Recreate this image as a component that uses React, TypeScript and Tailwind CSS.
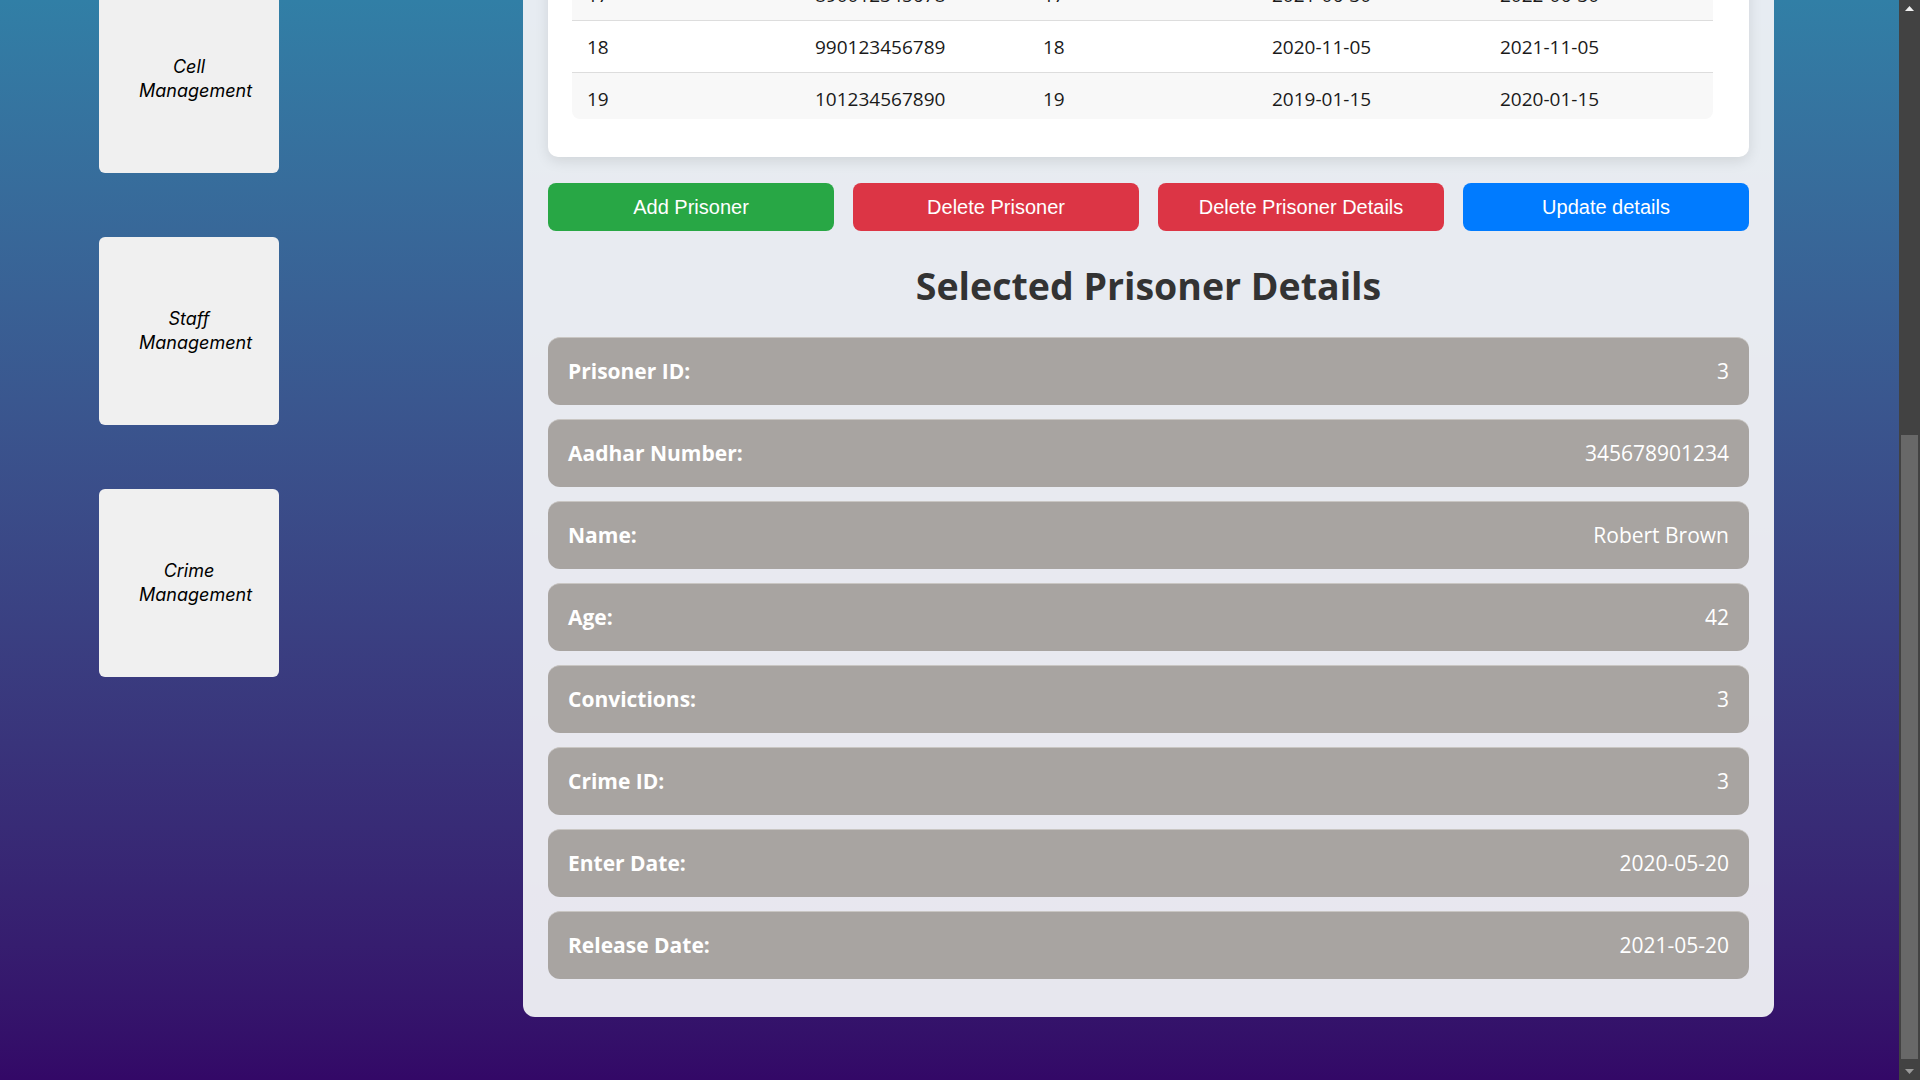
interface Detail {
  label: string
  value: string
}

const ROWS = [
  { id: '17', aadhar: '890012345678', cell: '17', enter: '2021-06-30', release: '2022-06-30', shade: true },
  { id: '18', aadhar: '990123456789', cell: '18', enter: '2020-11-05', release: '2021-11-05', shade: false },
  { id: '19', aadhar: '101234567890', cell: '19', enter: '2019-01-15', release: '2020-01-15', shade: true },
]

const DETAILS: Detail[] = [
  { label: 'Prisoner ID:', value: '3' },
  { label: 'Aadhar Number:', value: '345678901234' },
  { label: 'Name:', value: 'Robert Brown' },
  { label: 'Age:', value: '42' },
  { label: 'Convictions:', value: '3' },
  { label: 'Crime ID:', value: '3' },
  { label: 'Enter Date:', value: '2020-05-20' },
  { label: 'Release Date:', value: '2021-05-20' },
]

const NAV = ['Cell Management', 'Staff Management', 'Crime Management']

const BUTTONS = [
  { label: 'Add Prisoner', color: 'bg-[#28a745]' },
  { label: 'Delete Prisoner', color: 'bg-[#dc3545]' },
  { label: 'Delete Prisoner Details', color: 'bg-[#dc3545]' },
  { label: 'Update details', color: 'bg-[#007bff]' },
]

export default function App() {
  return (
    <div className="flex h-screen w-full overflow-hidden bg-gradient-to-b from-[#317fa6] to-[#330867]">
      <div className="flex flex-1 items-start overflow-hidden">
        {/* sidebar */}
        <aside className="w-[523px] shrink-0 pl-[99px] -mt-[15px] flex flex-col gap-[64px]">
          {NAV.map((item) => (
            <div
              key={item}
              className="w-[180px] h-[188px] bg-[#f0f0f0] rounded-md px-10 flex items-center justify-center text-center italic font-normal text-[18px] leading-[24px] text-black font-['Inter',sans-serif]"
            >
              <p className="w-full">{item}</p>
            </div>
          ))}
        </aside>

        {/* main panel */}
        <main className="w-[1251px] shrink-0 -mt-[82px] bg-[#f1f2f5]/95 rounded-xl px-[25px] pt-6 pb-6 font-['Open_Sans',sans-serif]">
          <div className="bg-white rounded-[10px] shadow-[0_4px_14px_rgba(0,0,0,0.1)] px-6 pt-[26px] pb-[38px]">
            <div className="w-[1141px] h-[151px] overflow-hidden rounded-lg">
              <table className="w-full border-collapse table-fixed text-[19px] leading-[26px] text-[#1a1a1a]">
                <tbody>
                  {ROWS.map((row) => (
                    <tr key={row.id} className={`border-b border-[#dddddd] ${row.shade ? 'bg-[#f8f8f8]' : 'bg-white'}`}>
                      <td className="h-[52px] pl-[15px] pt-[2px] w-[228px]">{row.id}</td>
                      <td className="h-[52px] pl-[15px] pt-[2px] w-[228px]">{row.aadhar}</td>
                      <td className="h-[52px] pl-[15px] pt-[2px] w-[228px]">{row.cell}</td>
                      <td className="h-[52px] pl-[16px] pt-[2px] w-[228px]">{row.enter}</td>
                      <td className="h-[52px] pl-[16px] pt-[2px] w-[229px]">{row.release}</td>
                    </tr>
                  ))}
                </tbody>
              </table>
            </div>
          </div>

          <div className="mt-[26px] grid grid-cols-4 gap-[19px]">
            {BUTTONS.map((btn) => (
              <button
                key={btn.label}
                className={`${btn.color} h-[48px] rounded-lg text-white text-[20px] font-['Liberation_Sans',Arial,sans-serif]`}
              >
                {btn.label}
              </button>
            ))}
          </div>

          <h2 className="mt-[28px] mb-[25px] text-center text-[37.5px] leading-[53px] font-bold text-[#333333]">
            Selected Prisoner Details
          </h2>

          <div className="flex flex-col">
            {DETAILS.map((d) => (
              <div
                key={d.label}
                className="h-[68px] mb-[14px] bg-[#a8a4a1] rounded-xl border-t border-[#c9c6c3] px-5 flex items-center justify-between text-white text-[21px]"
              >
                <span className="font-bold">{d.label}</span>
                <span>{d.value}</span>
              </div>
            ))}
          </div>
        </main>
      </div>

      {/* window scrollbar */}
      <div className="w-[21px] shrink-0 bg-[#424242] flex flex-col">
        <div className="h-[17px] flex items-center justify-center">
          <svg width="9" height="5" viewBox="0 0 9 5">
            <path d="M4.5 0 L9 5 L0 5 Z" fill="#f0f0f0" />
          </svg>
        </div>
        <div className="h-[418px]" />
        <div className="h-[624px] mx-[2px] bg-[#686868]" />
        <div className="flex-1" />
        <div className="h-[17px] flex items-center justify-center">
          <svg width="9" height="5" viewBox="0 0 9 5">
            <path d="M0 0 L9 0 L4.5 5 Z" fill="#9a9a9a" />
          </svg>
        </div>
      </div>
    </div>
  )
}
